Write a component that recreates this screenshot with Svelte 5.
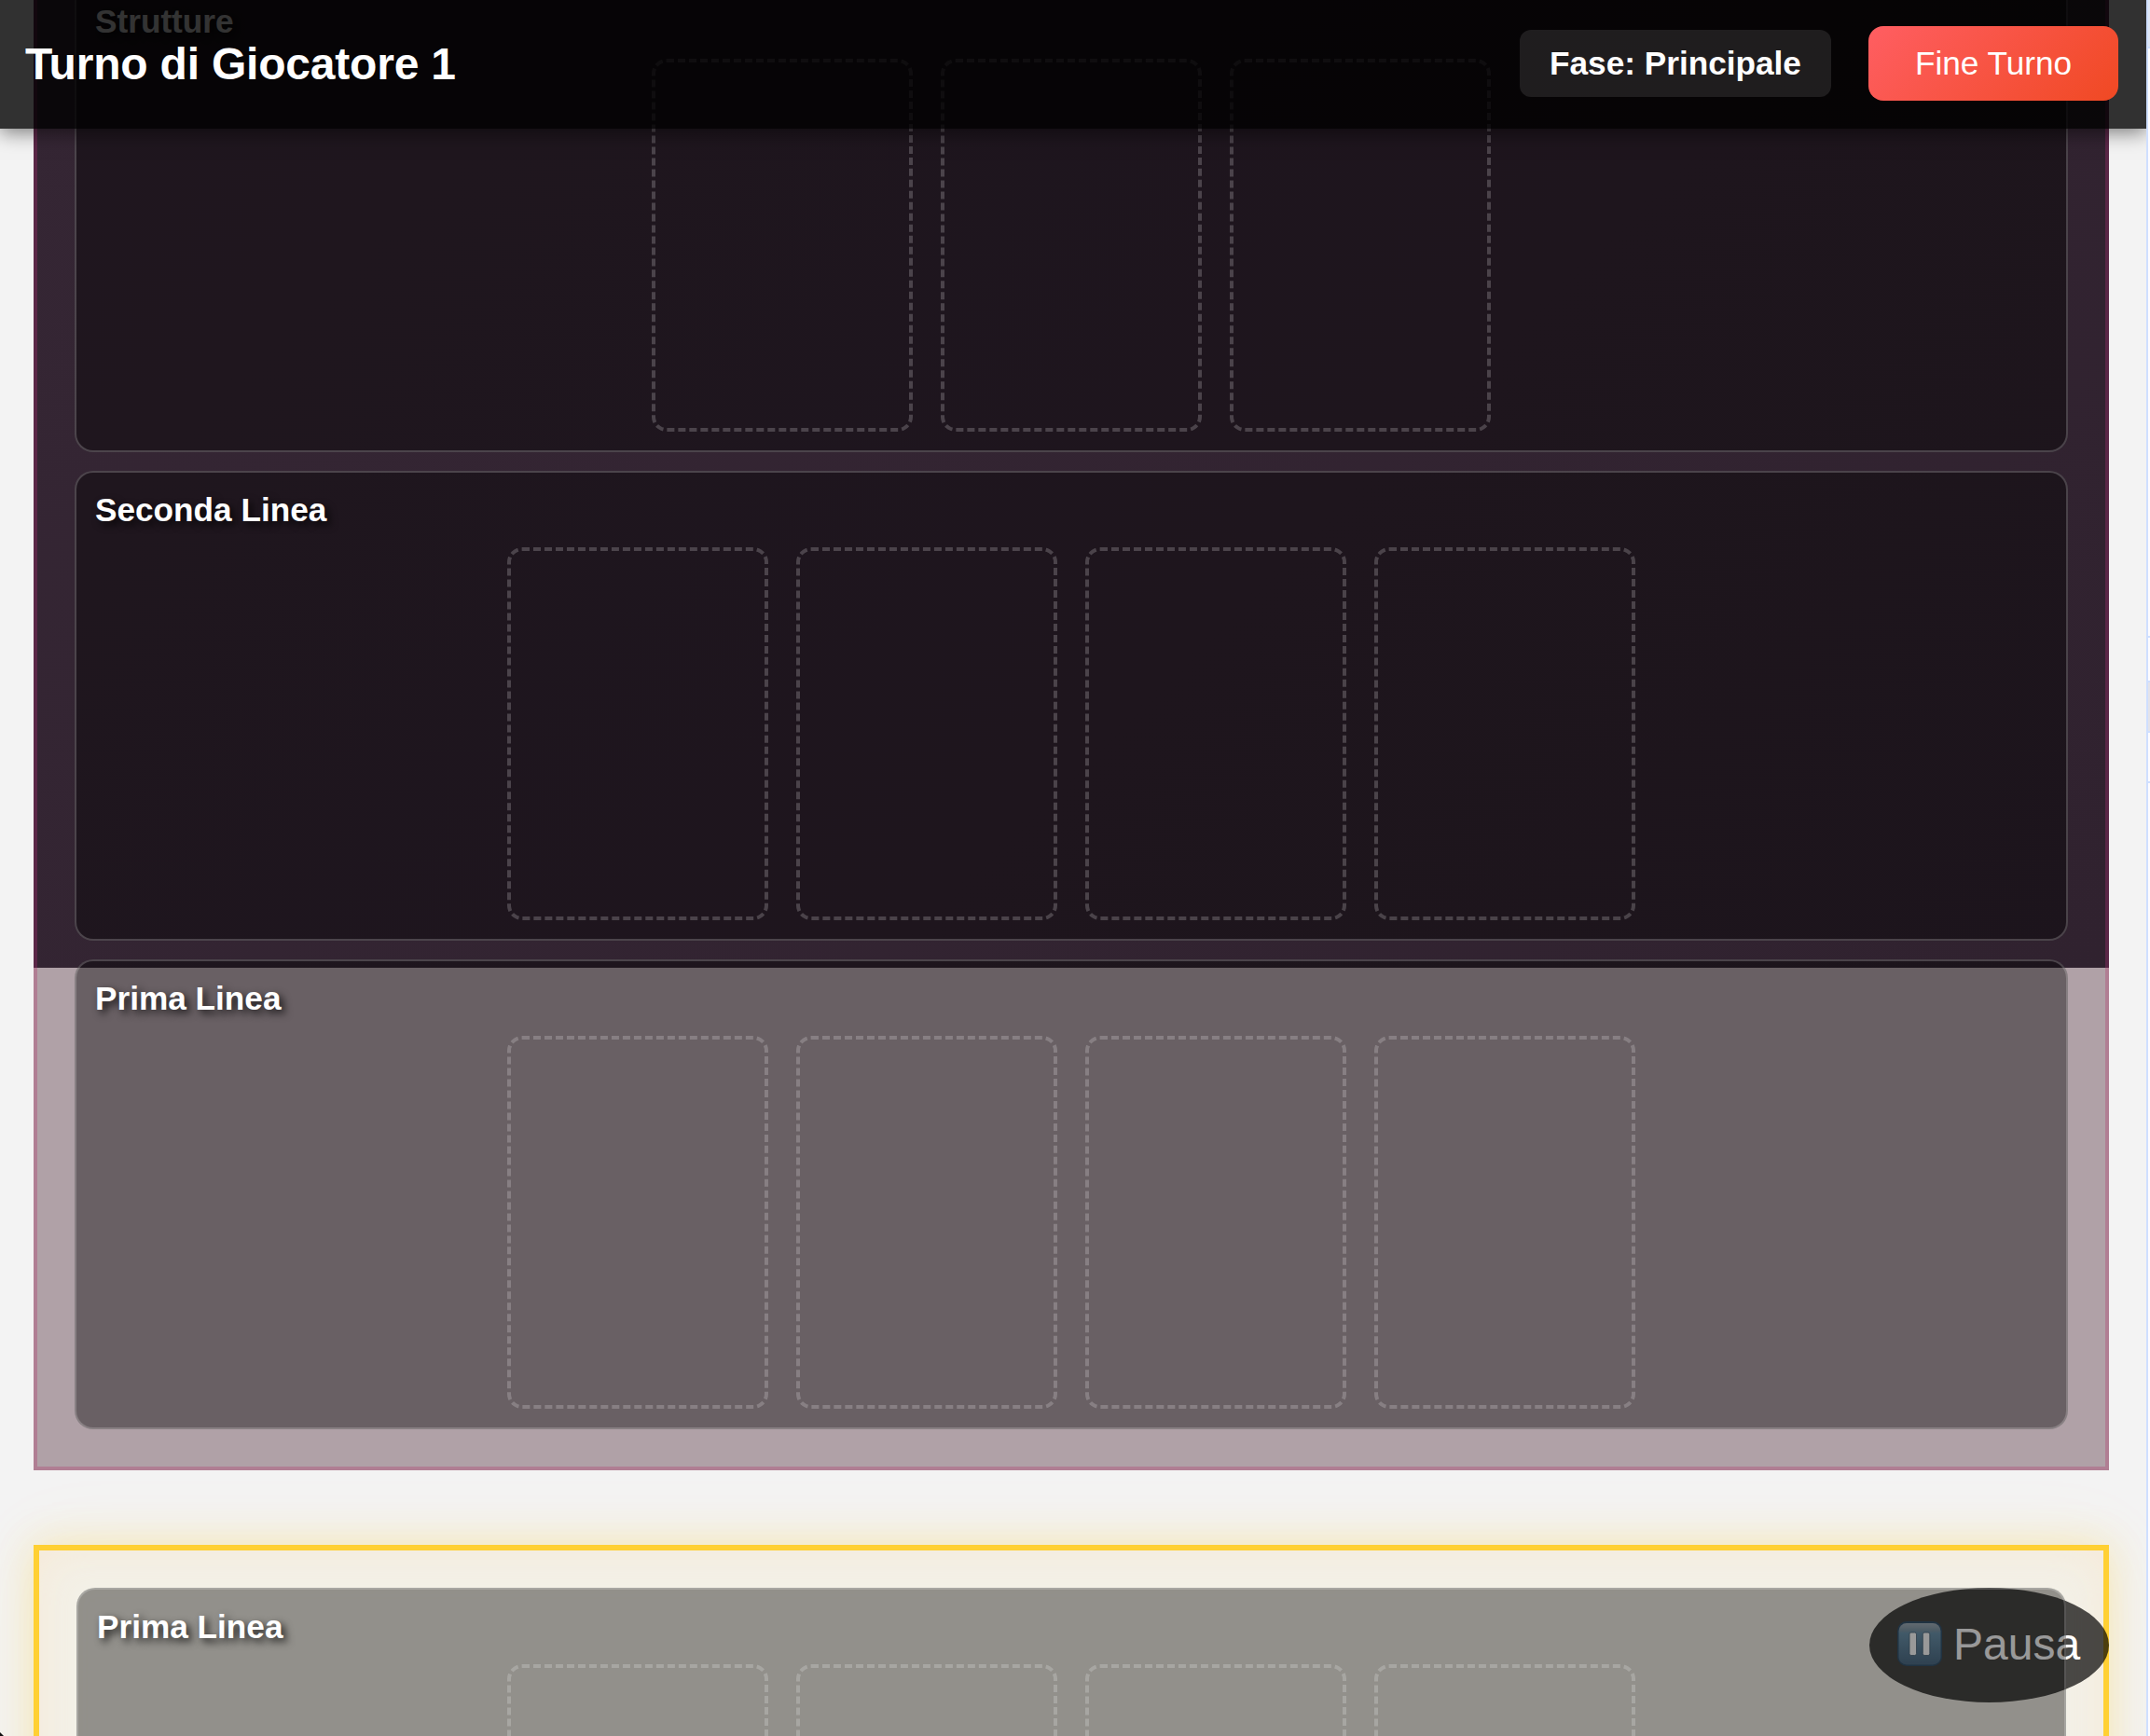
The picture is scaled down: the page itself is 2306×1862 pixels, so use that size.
<script>
  const rows = [
    { title: 'Strutture', slots: 3 },
    { title: 'Seconda Linea', slots: 4 },
    { title: 'Prima Linea', slots: 4 }
  ];
</script>

{#snippet zone(title, slots)}
  <section class="zone">
    <h3>{title}</h3>
    <div class="slots">
      {#each Array(slots) as _}
        <div class="slot"></div>
      {/each}
    </div>
  </section>
{/snippet}

<div class="screen">
  <main class="game">
    <header>
      <h1>Turno di Giocatore 1</h1>
      <div class="actions">
        <div class="phase">Fase: Principale</div>
        <button class="end">Fine Turno</button>
      </div>
    </header>

    <div class="board opponent">
      {#each rows as row}
        {@render zone(row.title, row.slots)}
      {/each}
    </div>

    <div class="board active">
      <button class="pause">
        <svg viewBox="0 0 48 48" width="48" height="48" aria-hidden="true">
          <defs>
            <linearGradient id="key" x1="0" y1="0" x2="0" y2="1">
              <stop offset="0" stop-color="#a3b1bb" />
              <stop offset="0.18" stop-color="#7f98a8" />
              <stop offset="0.24" stop-color="#6d95ae" />
              <stop offset="1" stop-color="#4f6d86" />
            </linearGradient>
          </defs>
          <rect width="48" height="48" rx="10" fill="#36556e" />
          <rect x="1.5" y="2" width="45" height="44.5" rx="8.5" fill="url(#key)" />
          <rect x="13" y="12" width="7.5" height="24.5" rx="1.8" fill="#fff" stroke="#4a6478" stroke-width="0.8" />
          <rect x="27.3" y="12" width="7.5" height="24.5" rx="1.8" fill="#fff" stroke="#4a6478" stroke-width="0.8" />
        </svg>
        <span>Pausa</span>
      </button>
      {@render zone('Prima Linea', 4)}
    </div>
    <i class="corner"></i>
  </main>
  <aside>
    <i class="row top"></i>
    <i class="row first"></i>
    <i class="row shaded"></i>
    <i class="row"></i>
  </aside>
</div>

<style>
  :global(body) {
    margin: 0;
    overflow: hidden;
  }
  .screen {
    display: flex;
    width: 2306px;
    height: 1862px;
    overflow: hidden;
    font-family: 'Liberation Sans', Arial, sans-serif;
    color: #fff;
  }
  .game {
    position: relative;
    width: 2302px;
    flex: none;
    overflow: hidden;
    background: #f3f3f3;
  }
  header {
    position: absolute;
    z-index: 5;
    top: 0;
    left: 0;
    right: 0;
    height: 138px;
    box-sizing: border-box;
    padding: 28px 30px 0 27px;
    display: flex;
    justify-content: space-between;
    align-items: flex-start;
    background: rgba(0, 0, 0, 0.8);
    box-shadow: 0 4px 20px rgba(0, 0, 0, 0.5);
  }
  h1 {
    margin: 0;
    font-size: 48px;
    letter-spacing: -0.2px;
    line-height: 81px;
    white-space: nowrap;
  }
  .actions {
    display: flex;
    align-items: center;
    gap: 40px;
  }
  .phase {
    width: 334px;
    height: 72px;
    border-radius: 12px;
    background: rgba(255, 255, 255, 0.1);
    text-align: center;
    font-size: 35.2px;
    font-weight: bold;
    line-height: 72px;
    white-space: nowrap;
  }
  .end {
    width: 268px;
    height: 80px;
    padding: 0;
    border: 0;
    border-radius: 16px;
    background: linear-gradient(135deg, #ff5e62, #f04923);
    color: #fff;
    font: 35.2px/80px 'Liberation Sans', Arial, sans-serif;
  }
  .board {
    position: relative;
    box-sizing: border-box;
    width: 2226px;
    margin-left: 36px;
    display: flex;
    flex-direction: column;
    gap: 20px;
  }
  .opponent {
    margin-top: -63px;
    padding: 40px;
    border: 4px solid rgba(176, 48, 104, 0.3);
    background:
      linear-gradient(135deg, #352634, #30222f) padding-box 0 0 / 100% 1097px no-repeat,
      linear-gradient(#35243a, #35243a) border-box 0 0 / 100% 1101px no-repeat,
      #b0a1a7;
  }
  .active {
    margin-top: 80px;
    height: 620px;
    padding: 40px;
    border: 6px solid #ffd033;
    box-shadow:
      0 0 40px rgba(255, 208, 51, 0.3),
      0 0 80px rgba(255, 208, 51, 0.08),
      inset 0 0 50px rgba(255, 220, 180, 0.3);
    background: #f3f1e8;
  }
  .zone {
    position: relative;
    flex: none;
    height: 504px;
    box-sizing: border-box;
    padding: 20px;
    border: 2px solid rgba(255, 255, 255, 0.2);
    border-radius: 20px;
    background: rgba(0, 0, 0, 0.4);
  }
  h3 {
    margin: 0 0 20px;
    font-size: 35.2px;
    line-height: 40px;
    text-shadow: 4px 4px 8px rgba(0, 0, 0, 0.8);
  }
  .slots {
    display: flex;
    justify-content: center;
    gap: 30px;
  }
  .slot {
    width: 280px;
    height: 400px;
    box-sizing: border-box;
    border: 4px dashed rgba(255, 255, 255, 0.2);
    border-radius: 16px;
  }
  .pause {
    position: absolute;
    top: 40px;
    right: -6px;
    width: 257px;
    height: 123px;
    box-sizing: border-box;
    padding: 0 30px 3px;
    border: 0;
    border-radius: 50%;
    display: flex;
    align-items: center;
    background: rgba(0, 0, 0, 0.7);
    color: #fff;
    font: 48px/56px 'Liberation Sans', Arial, sans-serif;
  }
  .pause span {
    margin-left: 12px;
    padding-top: 2px;
  }
  .pause svg {
    flex: none;
    display: block;
  }
  .corner {
    position: absolute;
    left: 0;
    bottom: 0;
    width: 4px;
    height: 4px;
    clip-path: polygon(0 0, 100% 100%, 0 100%);
    background: #111;
  }
  aside {
    flex: 1;
    box-sizing: border-box;
    border-left: 2px solid #cfdfff;
    background: #fdfcff;
  }
  .row {
    display: block;
    height: 52px;
    border-bottom: 2px solid #cfdfff;
  }
  .top {
    height: 50px;
    background: #dfe6f5;
  }
  .first {
    margin-top: 630px;
    height: 46px;
    border-top: 2px solid #cfdfff;
  }
  .shaded {
    background: #e3e3ea;
  }
</style>
